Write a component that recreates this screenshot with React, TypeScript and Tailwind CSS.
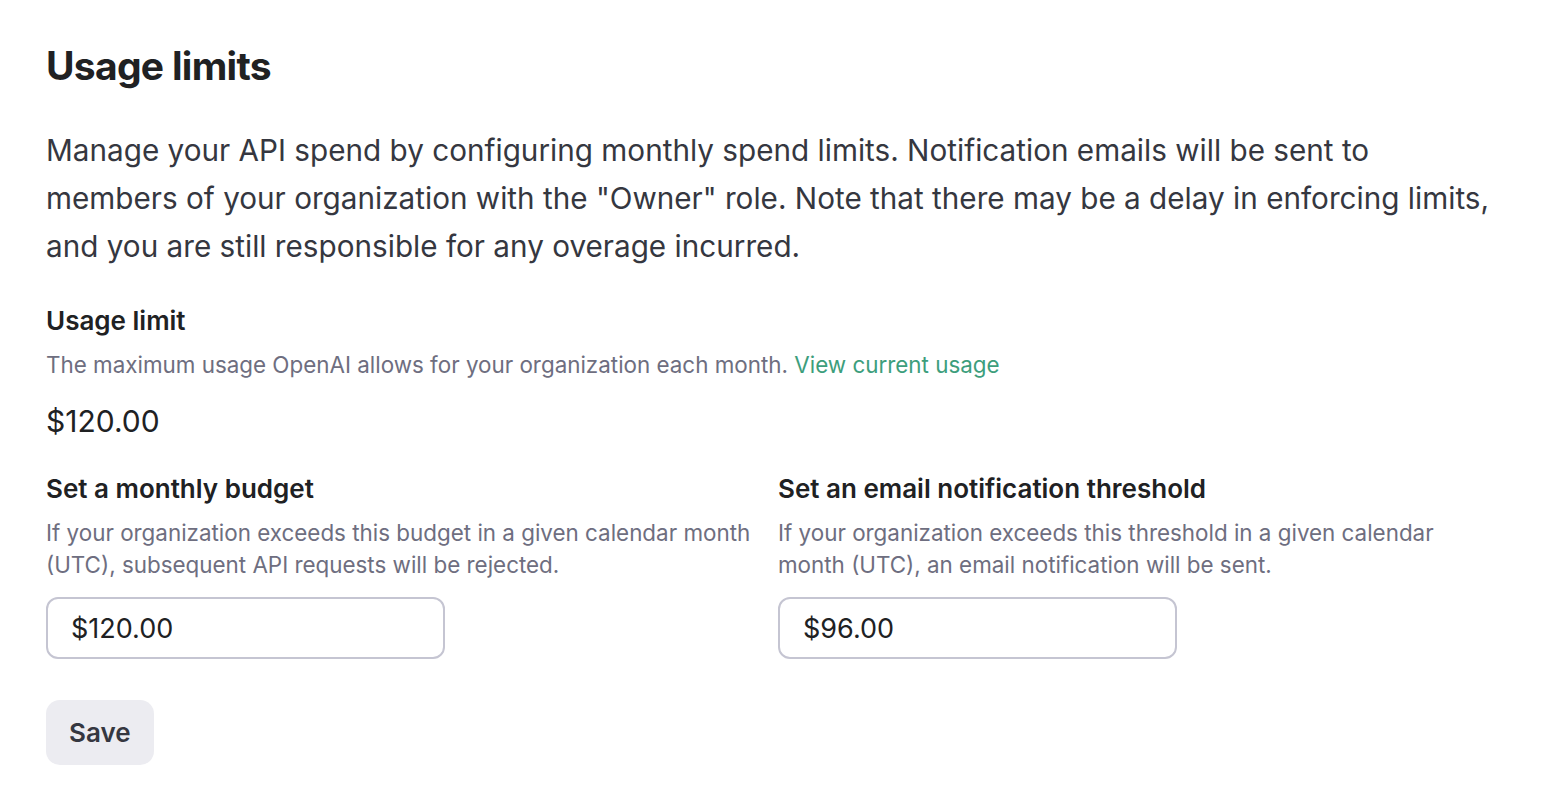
import React from "react";

function Field({ title, description, value }: { title: string; description: string; value: string }) {
  return (
    <div className="pr-[24px]">
      <div className="text-[26px] leading-[36px] font-semibold text-[#202123]">{title}</div>
      <p className="mt-[10px] text-[22.4px] leading-[32px] text-[#6e6e80]">{description}</p>
      <input
        readOnly
        value={value}
        className="mt-[16px] block h-[62px] w-[399px] rounded-[12px] border-2 border-[#c5c5d2] bg-white px-[23px] text-[27px] text-[#202123] outline-none"
      />
    </div>
  );
}

export default function App() {
  return (
    <div
      className="min-h-screen bg-white pl-[46px] pr-[46px] pt-[42px] text-[#353740]"
      style={{ fontFamily: "Inter, 'Noto Sans', sans-serif" }}
    >
      <h1 className="text-[39px] leading-[48px] font-bold tracking-[-0.7px] text-[#202123]">Usage limits</h1>
      <p className="mt-[36px] whitespace-nowrap text-[29.7px] leading-[48px] text-[#353740]">
        Manage your API spend by configuring monthly spend limits. Notification emails will be sent to
        <br />
        members of your organization with the "Owner" role. Note that there may be a delay in enforcing limits,
        <br />
        and you are still responsible for any overage incurred.
      </p>

      <div className="mt-[33px] text-[26px] leading-[36px] font-semibold text-[#202123]">Usage limit</div>
      <p className="mt-[10px] text-[22.4px] leading-[32px] text-[#6e6e80]">
        The maximum usage OpenAI allows for your organization each month.{" "}
        <a href="#" className="text-[#3d9e7c]">
          View current usage
        </a>
      </p>
      <div className="mt-[20px] text-[30px] leading-[40px] text-[#202123]">$120.00</div>

      <div className="mt-[30px] grid w-[1464px] grid-cols-2">
        <Field
          title="Set a monthly budget"
          description="If your organization exceeds this budget in a given calendar month (UTC), subsequent API requests will be rejected."
          value="$120.00"
        />
        <Field
          title="Set an email notification threshold"
          description="If your organization exceeds this threshold in a given calendar month (UTC), an email notification will be sent."
          value="$96.00"
        />
      </div>

      <button className="mt-[41px] h-[65px] rounded-[14px] bg-[#ececf1] px-[23px] text-[26px] font-semibold text-[#353740]">
        Save
      </button>
    </div>
  );
}
